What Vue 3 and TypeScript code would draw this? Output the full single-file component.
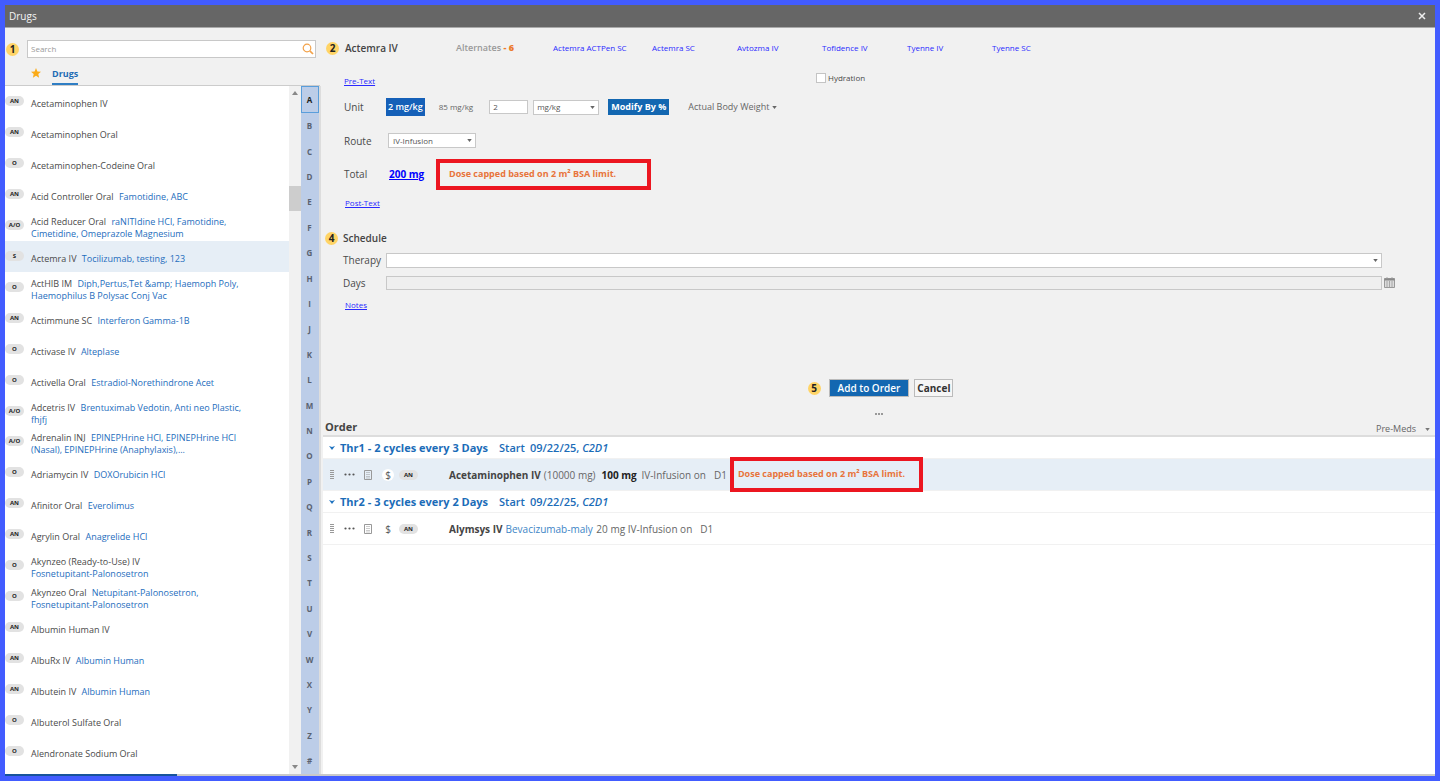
<script setup lang="ts">
import { ref } from 'vue'

interface Drug { tag: string; name: string; generic?: string }

const drugs: Drug[] = [
  { tag: 'AN', name: 'Acetaminophen IV' },
  { tag: 'AN', name: 'Acetaminophen Oral' },
  { tag: 'O', name: 'Acetaminophen-Codeine Oral' },
  { tag: 'AN', name: 'Acid Controller Oral', generic: 'Famotidine, ABC' },
  { tag: 'A/O', name: 'Acid Reducer Oral', generic: 'raNITIdine HCl, Famotidine, Cimetidine, Omeprazole Magnesium' },
  { tag: 'S', name: 'Actemra IV', generic: 'Tocilizumab, testing, 123' },
  { tag: 'O', name: 'ActHIB IM', generic: 'Diph,Pertus,Tet &amp; Haemoph Poly, Haemophilus B Polysac Conj Vac' },
  { tag: 'AN', name: 'Actimmune SC', generic: 'Interferon Gamma-1B' },
  { tag: 'O', name: 'Activase IV', generic: 'Alteplase' },
  { tag: 'O', name: 'Activella Oral', generic: 'Estradiol-Norethindrone Acet' },
  { tag: 'A/O', name: 'Adcetris IV', generic: 'Brentuximab Vedotin, Anti neo Plastic, fhjfj' },
  { tag: 'A/O', name: 'Adrenalin INJ', generic: 'EPINEPHrine HCl, EPINEPHrine HCl (Nasal), EPINEPHrine (Anaphylaxis),...' },
  { tag: 'O', name: 'Adriamycin IV', generic: 'DOXOrubicin HCl' },
  { tag: 'AN', name: 'Afinitor Oral', generic: 'Everolimus' },
  { tag: 'AN', name: 'Agrylin Oral', generic: 'Anagrelide HCl' },
  { tag: 'O', name: 'Akynzeo (Ready-to-Use) IV', generic: 'Fosnetupitant-Palonosetron' },
  { tag: 'O', name: 'Akynzeo Oral', generic: 'Netupitant-Palonosetron, Fosnetupitant-Palonosetron' },
  { tag: 'AN', name: 'Albumin Human IV' },
  { tag: 'AN', name: 'AlbuRx IV', generic: 'Albumin Human' },
  { tag: 'AN', name: 'Albutein IV', generic: 'Albumin Human' },
  { tag: 'O', name: 'Albuterol Sulfate Oral' },
  { tag: 'O', name: 'Alendronate Sodium Oral' },
]
const letters = 'ABCDEFGHIJKLMNOPQRSTUVWXYZ#'.split('')
const alternates = ['Actemra ACTPen SC', 'Actemra SC', 'Avtozma IV', 'Tofidence IV', 'Tyenne IV', 'Tyenne SC']
const orders = [
  { title: 'Thr1 - 2 cycles every 3 Days', drug: 'Acetaminophen IV', generic: '', note: '(10000 mg)', dose: '100 mg', rest: 'IV-Infusion on', capped: true },
  { title: 'Thr2 - 3 cycles every 2 Days', drug: 'Alymsys IV', generic: 'Bevacizumab-maly', note: '', dose: '', rest: '20 mg IV-Infusion on', capped: false },
]
const selected = ref('Actemra IV')
const letter = ref('A')
const search = ref('')
const amount = ref('2')
const hydration = ref(false)

// Hyphenated names stay whole, so a line breaks only between words.
const words = (text?: string): string[] => (text ? text.split(' ') : [])
</script>

<template>
  <div class="window">
    <header class="titlebar">
      <h1>Drugs</h1>
      <button class="close" aria-label="Close">
        <svg width="8" height="8" viewBox="0 0 8 8"><path d="M1 1l6 6M7 1L1 7" stroke="#eee" stroke-width="1.5" /></svg>
      </button>
    </header>

    <div class="main">
      <aside class="sidebar">
        <div class="search-row">
          <span class="step">1</span>
          <div class="search">
            <input v-model="search" type="text" placeholder="Search" aria-label="Search" />
            <svg width="12" height="12" viewBox="0 0 12 12" fill="none" stroke="#f2a24a"><circle cx="5" cy="5" r="3.8" stroke-width="1.2" /><path d="M7.8 7.8L11 11" stroke-width="1.7" /></svg>
          </div>
        </div>
        <nav class="tabs">
          <button class="star" aria-label="Favorites">
            <svg width="10" height="10" viewBox="0 0 10 10"><path d="M5 0l1.4 3.4 3.6.3-2.7 2.4.8 3.6L5 7.8 1.9 9.7l.8-3.6L0 3.7l3.6-.3z" fill="#fbab18" /></svg>
          </button>
          <button class="tab">Drugs</button>
        </nav>
        <div class="browser">
          <ul class="drugs">
            <li v-for="d in drugs" :key="d.name" :class="{ active: d.name === selected }" @click="selected = d.name">
              <span class="tag">{{ d.tag }}</span>
              <p><span class="name">{{ d.name }}</span><template v-for="(w, i) in words(d.generic)" :key="i">{{ ' ' }}<span class="generic">{{ w }}</span></template></p>
            </li>
          </ul>
          <div class="scroll" aria-hidden="true">
            <svg width="6" height="4" viewBox="0 0 6 4"><path d="M0 4l3-4 3 4z" fill="#888" /></svg>
            <div class="track"><div class="thumb"></div></div>
            <svg width="6" height="4" viewBox="0 0 6 4"><path d="M0 0l3 4 3-4z" fill="#888" /></svg>
          </div>
          <div class="letters">
            <button v-for="l in letters" :key="l" :class="{ on: l === letter }" @click="letter = l">{{ l }}</button>
          </div>
        </div>
      </aside>

      <section class="detail">
        <form class="form" @submit.prevent>
          <div class="row top">
            <span class="step">2</span>
            <h2 class="drug-title">Actemra IV</h2>
            <span class="alt-label">Alternates <b>- 6</b></span>
            <nav class="alts"><a v-for="a in alternates" :key="a" href="#">{{ a }}</a></nav>
          </div>
          <div class="row pre">
            <a class="text-link" href="#">Pre-Text</a>
            <label class="hydration"><input v-model="hydration" type="checkbox" />Hydration</label>
          </div>
          <div class="row unit">
            <label class="label" for="dose">Unit</label>
            <button class="chip">2 mg/kg</button>
            <button class="plain small">85 mg/kg</button>
            <input id="dose" v-model="amount" class="amount" type="text" />
            <div class="pick pick-unit">
              <select aria-label="Dose unit"><option>mg/kg</option></select>
              <svg class="caret" viewBox="0 0 6 4"><path d="M0 0l3 4 3-4z" /></svg>
            </div>
            <button class="modify">Modify By %</button>
            <button class="plain weight">Actual Body Weight <svg width="5" height="3" viewBox="0 0 6 4"><path d="M0 0l3 4 3-4z" fill="#666" /></svg></button>
          </div>
          <div class="row route">
            <label class="label" for="route">Route</label>
            <div class="pick pick-route">
              <select id="route"><option>IV-Infusion</option></select>
              <svg class="caret" viewBox="0 0 6 4"><path d="M0 0l3 4 3-4z" /></svg>
            </div>
          </div>
          <div class="row total">
            <span class="label">Total</span>
            <a class="total-link" href="#">200 mg</a>
            <p class="warning warning-form">Dose capped based on 2 m² BSA limit.</p>
          </div>
          <div class="row post"><a class="text-link" href="#">Post-Text</a></div>

          <div class="row schedule">
            <span class="step">4</span>
            <h2>Schedule</h2>
          </div>
          <div class="row wide">
            <label class="label" for="therapy">Therapy</label>
            <div class="pick">
              <select id="therapy"><option></option></select>
              <svg class="caret" viewBox="0 0 6 4"><path d="M0 0l3 4 3-4z" /></svg>
            </div>
          </div>
          <div class="row wide days">
            <label class="label" for="days">Days</label>
            <input id="days" type="text" disabled />
            <button class="calendar" aria-label="Choose days">
              <svg width="11" height="11" viewBox="0 0 11 11"><path d="M.5 1.5h10v9H.5z" fill="#dcdcdc" stroke="#999" /><path d="M.5 2.5h10" stroke="#888" stroke-width="2" /><path d="M3 0v2M8 0v2M3 4v6M5.5 4v6M8 4v6" stroke="#999" stroke-width=".8" /></svg>
            </button>
          </div>
          <div class="row notes"><a class="text-link" href="#">Notes</a></div>

          <div class="actions">
            <span class="step">5</span>
            <button class="add">Add to Order</button>
            <button class="cancel">Cancel</button>
          </div>
        </form>

        <div class="splitter">
          <svg width="8" height="2" viewBox="0 0 8 2" fill="#999"><rect width="2" height="2" /><rect x="3" width="2" height="2" /><rect x="6" width="2" height="2" /></svg>
        </div>
        <div class="order-head">
          <h2>Order</h2>
          <button class="plain premeds">Pre-Meds <svg width="5" height="3" viewBox="0 0 6 4"><path d="M0 0l3 4 3-4z" fill="#777" /></svg></button>
        </div>
        <div class="orders">
          <section v-for="o in orders" :key="o.title">
            <h3>
              <svg width="6" height="4" viewBox="0 0 6 4"><path d="M0 0l3 1 3-1-3 4z" fill="#1f72bf" /></svg>
              <span class="cycle">{{ o.title }}</span><span class="start">Start</span><span>09/22/25, <i>C2D1</i></span>
            </h3>
            <div class="item" :class="{ active: o.capped }">
              <div class="tools">
                <svg width="4" height="9" viewBox="0 0 4 9"><path d="M0 .5h4M0 2.5h4M0 4.5h4M0 6.5h4M0 8.5h4" stroke="#999" /></svg>
                <button aria-label="More"><svg width="11" height="3" viewBox="0 0 11 3" fill="#555"><circle cx="1.5" cy="1.5" r="1.1" /><circle cx="5.5" cy="1.5" r="1.1" /><circle cx="9.5" cy="1.5" r="1.1" /></svg></button>
                <button class="sheet" aria-label="Details"><svg width="8" height="10" viewBox="0 0 8 10" fill="none" stroke="#999"><path d="M.5.5h7v9h-7z" /><path d="M2 2.5h4M2 4.5h4M2 6.5h4M2 8h4" stroke-width=".5" /></svg></button>
                <button class="cost">$</button>
                <span class="tag">AN</span>
              </div>
              <p>
                <b>{{ o.drug }}</b>
                <span v-if="o.generic" class="gen">{{ o.generic }}</span>
                <span v-if="o.note" class="note">{{ o.note }}</span>
                <strong v-if="o.dose">{{ o.dose }}</strong>
                {{ o.rest }}<span class="day">D1</span>
              </p>
              <p v-if="o.capped" class="warning warning-item">Dose capped based on 2 m² BSA limit.</p>
            </div>
          </section>
        </div>
      </section>
    </div>
    <div class="progress"><div></div></div>
  </div>
</template>

<style>
body { margin: 0; }
</style>

<style scoped>
* { box-sizing: border-box; }
.window {
  min-height: 100vh; display: flex; flex-direction: column;
  border: 5px solid #425cff; background: #f1f1f1; color: #4a4a4a;
  font-family: "Open Sans", "Noto Sans", sans-serif; font-size: 9px; font-weight: 500; line-height: 12px;
}
h1, h2, h3, p, ul { margin: 0; padding: 0; }
svg { display: block; flex: none; }
button { font: inherit; color: inherit; background: none; border: 0; padding: 0; margin: 0; white-space: nowrap; }
input, select { font: inherit; color: #555; margin: 0; border: 1px solid #c8c8c8; border-radius: 0; background: #fff; min-width: 0; }
a { color: #2a2aff; text-decoration: none; }
.titlebar { display: flex; justify-content: space-between; align-items: center; height: 23px; padding: 0 9px 0 4px; background: #666; border-bottom: 1px solid #aaa; }
.titlebar h1 { font-size: 10px; font-weight: 500; color: #f4f4f4; }
.main { flex: 1; display: flex; }
.step { flex: none; width: 13px; height: 13px; border-radius: 50%; background: #ffd466; color: #222; font-size: 10px; font-weight: 700; line-height: 13px; text-align: center; }

.sidebar { flex: 0 0 318px; display: flex; flex-direction: column; }
.search-row { display: flex; align-items: center; gap: 8px; padding: 12px 7px 0 1px; }
.search { flex: 1; display: flex; align-items: center; height: 18px; padding-right: 1px; border: 1px solid #c8c8c8; background: #fff; }
.search input { flex: 1; border: 0; padding: 0 3px; font-size: 8px; outline: 0; }
.search input::placeholder { color: #999; opacity: 1; }
.tabs { display: flex; align-items: center; gap: 11px; height: 28px; margin-right: 3px; padding-left: 26px; border-bottom: 1px solid #ccc; }
.star { padding-top: 3px; }
.tab { align-self: flex-end; height: 20px; border-bottom: 2px solid #2f7ec4; color: #1f6cb5; font-weight: 700; }
.browser { flex: 1; display: flex; background: #fff; border-right: 2px solid #ddd; margin-right: 2px; }
.drugs { flex: 1; display: flex; flex-direction: column; list-style: none; padding-bottom: 7px; }
.drugs li { flex: 1 0 30px; display: flex; align-items: center; gap: 7px; padding-right: 44px; }
.drugs li.active { background: #e6eef6; }
.drugs p { padding-top: 5px; }
.tag { flex: none; width: 19px; height: 10px; border-radius: 5px; background: #e2e2e2; color: #222; font-size: 6px; font-weight: 700; line-height: 10px; text-align: center; }
.drugs .tag { align-self: flex-start; margin-top: 10px; }
.name { margin-right: 3px; }
.generic { color: #1e6dbd; white-space: nowrap; }
.scroll { width: 12px; display: flex; flex-direction: column; align-items: center; padding: 5px 0; background: #f1f1f1; }
.track { flex: 1; align-self: stretch; display: flex; flex-direction: column; }
.track::before { content: ""; flex: 9; }
.track::after { content: ""; flex: 55; }
.thumb { height: 25px; background: #cdcdcd; }
.letters { width: 18px; display: flex; flex-direction: column; background: #bccde8; }
.letters button { flex: 1; padding-right: 1px; font-size: 8px; font-weight: 700; color: #5a6270; }
.letters .on { border: 1px solid #5a9edb; color: #222; font-weight: 700; }

.detail { flex: 1; min-width: 0; display: flex; flex-direction: column; }
.form { padding-left: 3px; }
.row { display: flex; align-items: center; }
h2 { font-size: 10px; font-weight: 600; color: #444; }
.top { height: 40px; }
.drug-title { width: 117px; padding-left: 6px; }
.alt-label { width: 97px; color: #999; font-weight: 600; }
.alt-label b { color: #ec7a2b; }
.alts { display: grid; grid-template-columns: 99px repeat(5, 85px); font-size: 8px; }
.text-link { font-size: 8px; text-decoration: underline; }
.pre { height: 26px; padding-left: 18px; }
.pre .text-link { width: 472px; }
.hydration { display: flex; align-items: center; gap: 2px; padding-bottom: 6px; font-size: 8px; }
.hydration input { appearance: none; width: 10px; height: 10px; border: 1px solid #c4c4c4; }
.label { flex: none; width: 42px; font-size: 10px; }
.unit, .route, .total { padding-left: 18px; }
.unit { height: 26px; }
.chip { height: 18px; padding: 0 2px; background: #1560b8; color: #fff; font-weight: 600; }
.small { margin-left: 14px; font-size: 8px; }
.amount { width: 39px; height: 14px; margin-left: 16px; padding: 0 3px 2px; font-size: 8px; }
.pick { position: relative; display: flex; }
.pick select { appearance: none; width: 100%; height: 15px; padding: 0 4px; font-size: 8px; }
.pick .caret { position: absolute; right: 4px; top: 6px; width: 5px; height: 3px; fill: #666; pointer-events: none; }
.pick-unit { width: 66px; margin-left: 5px; }
.pick-unit select { padding: 0 3px; }
.pick-route { width: 88px; margin-left: 2px; }
.modify { height: 16px; margin-left: 9px; padding: 0 3px; background: #1367b1; color: #fff; font-weight: 700; }
.plain { display: flex; align-items: center; gap: 3px; color: #666; }
.weight { margin-left: 19px; }
.route { height: 41px; }
.total { height: 26px; }
.total-link { width: 50px; padding-left: 3px; font-size: 10px; font-weight: 700; color: #00f; text-decoration: underline; }
.warning { border: 4px solid #ec1620; color: #e8743b; font-size: 9px; font-weight: 700; white-space: nowrap; }
.warning-form { width: 215px; padding: 5px 9px 6px; }
.post { height: 31px; padding-left: 19px; }
.schedule { height: 22px; margin-top: 9px; gap: 5px; }
.schedule .step { margin-left: -1px; }
.wide { height: 22px; padding: 0 53px 0 17px; }
.wide .label { width: 43px; }
.wide .pick { flex: 1; }
.days { height: 23px; padding-right: 40px; }
.days input { flex: 1; height: 14px; background: #efefef; }
.calendar { margin-left: 2px; }
.notes { height: 22px; padding-left: 19px; }
.actions { display: flex; justify-content: center; align-items: center; padding: 63px 0 11px; }
.actions button { height: 18px; border: 1px solid #bbb; font-size: 10px; font-weight: 600; }
.actions .add { margin: 0 5px 0 8px; padding: 0 8px; background: #1367b1; color: #fff; }
.actions .cancel { padding: 0 2px; color: #333; font-weight: 700; background: #f6f6f6; }
.splitter { display: flex; justify-content: center; height: 10px; padding-top: 5px; }
.order-head { display: flex; align-items: center; justify-content: space-between; height: 17px; padding: 0 5px 0 2px; }
.order-head h2 { font-size: 11px; font-weight: 700; }
.premeds { gap: 9px; padding-top: 5px; }
.orders { flex: 1; background: #fff; border-top: 2px solid #ddd; font-size: 10px; line-height: 14px; }
h3 { display: flex; align-items: center; height: 22px; padding-left: 6px; border-bottom: 1px solid #f1f1f1; font-size: 11px; font-weight: 600; color: #1b6cb8; }
.cycle { margin: 0 11px 0 5px; font-weight: 700; }
.start { margin-right: 5px; }
.item { display: flex; align-items: center; height: 32px; padding-left: 7px; border-bottom: 1px solid #f1f1f1; color: #666; }
.item.active { background: #e6eef6; }
.tools { width: 119px; flex: none; display: flex; align-items: center; }
.tools button { margin-left: 10px; }
.tools .sheet { margin-left: 9px; }
.tools .cost { width: 12px; height: 12px; margin-left: 10px; border-radius: 50%; background: #fff; line-height: 12px; color: #555; }
.tools .tag { margin-left: 5px; }
.item b { color: #444; font-weight: 700; }
.item strong { margin-right: 2px; color: #222; }
.note { margin: 0 6px 0 3px; }
.gen { margin: 0 1px 0 3px; color: #3d85c6; }
.day { margin-left: 8px; }
.warning-item { width: 193px; height: 35px; margin-left: 3px; padding: 6px 4px; }
.progress { height: 2px; background: #c9c9c9; }
.progress div { width: 12%; height: 2px; background: #17549c; }
</style>
